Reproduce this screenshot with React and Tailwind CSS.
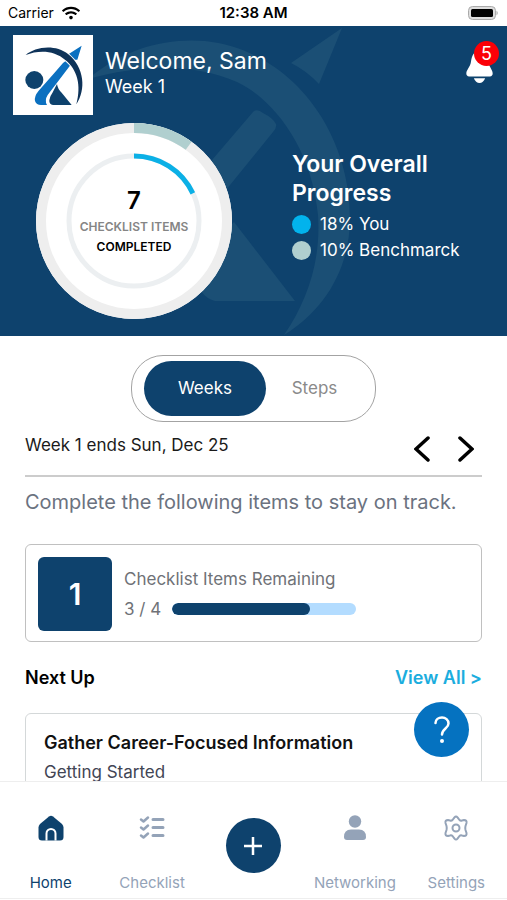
import { useState } from "react";
import { FaWifi } from "react-icons/fa";

const tabs = ["Weeks", "Steps"];

function Logo() {
  return (
    <svg viewBox="0 0 240 240" className="size-20 shrink-0 bg-white" role="img" aria-label="Logo">
      <circle cx="64" cy="135" r="27" fill="#0e426d" />
      <path
        d="M206 32 L166 58 Q172 62 173 67 L150 84 L126 112 L77 167 Q63 184 66 198 Q70 210 84 210 L102 210 Q94 196 104 180 L148 122 L180 80 L186 74 L193 74 Z"
        fill="#0b70c0"
      />
      <path
        d="M38 60 C66 36 126 26 166 58 C214 98 220 164 190 208 C206 150 192 104 158 76 C122 44 76 46 38 60 Z"
        fill="#0e3359"
        stroke="#fff"
        strokeWidth="6"
        paintOrder="stroke"
      />
      <path d="M132 147 Q134 162 146 173 L176 210 L120 210 Q108 208 109 196 Q110 184 118 174 Z" fill="#0e426d" />
    </svg>
  );
}

function Watermark() {
  return (
    <svg
      viewBox="0 26 507 310"
      preserveAspectRatio="xMinYMin slice"
      className="pointer-events-none absolute inset-0 size-full"
      fill="#1b4f75"
      aria-hidden="true"
    >
      <path d="M88 79 C125 48 165 38 205 41 C290 50 350 130 350 218 C350 268 325 310 284 335 C308 300 321 260 318 215 C312 150 275 100 237 82 C190 62 140 65 88 79 Z" />
      <path d="M342 28 L291 63 Q307 71 319 84 Z" />
      <path d="M253 112 Q257 108 263 113 Q273 118 276 124 Q277 128 273 132 L226 190 L150 290 L120 270 L212 160 Z" />
      <path d="M234 222 L295 301 L215 301 Q200 298 190 270 Z" />
    </svg>
  );
}

function ProgressRings() {
  return (
    <div className="relative size-[196px] shrink-0">
      <svg viewBox="0 0 196 196" className="size-full" fill="none" aria-hidden="true">
        <circle cx="98" cy="98" r="98" fill="#fff" />
        <g transform="rotate(-90 98 98)">
          <circle cx="98" cy="98" r="93" stroke="#eeeeee" strokeWidth="10" />
          <circle cx="98" cy="98" r="93" stroke="#b0cfcf" strokeWidth="10" pathLength="100" strokeDasharray="10 90" />
          <circle cx="98" cy="98" r="65" stroke="#eceff1" strokeWidth="5" />
          <circle cx="98" cy="98" r="65" stroke="#0bb0e6" strokeWidth="5" pathLength="100" strokeDasharray="18 82" />
        </g>
      </svg>
      <div className="absolute inset-0 flex flex-col items-center justify-center font-semibold">
        <span className="text-2xl leading-8 text-black">7</span>
        <span className="text-xs leading-5 text-[#858585]">CHECKLIST ITEMS</span>
        <span className="text-xs leading-5 text-black">COMPLETED</span>
      </div>
    </div>
  );
}

function StatusBar() {
  return (
    <div className="grid h-[26px] shrink-0 grid-cols-3 items-center px-2 text-black">
      <span className="flex items-center gap-2 text-sm">
        Carrier <FaWifi className="size-[18px]" />
      </span>
      <span className="text-center text-[15px] font-semibold">12:38 AM</span>
      <svg viewBox="0 0 31 14" className="h-3.5 w-[31px] justify-self-end" aria-hidden="true">
        <rect x="0.5" y="0.5" width="27" height="13" rx="4" fill="#ddd" stroke="#aaa" />
        <rect x="3" y="3" width="22" height="8" rx="1.5" fill="#000" />
        <path d="M28.5 4.500 Q31 7 28.500 9.500 Z" fill="#aaa" />
      </svg>
    </div>
  );
}

function Header() {
  return (
    <header className="relative h-[310px] shrink-0 bg-[#0e426d] text-white">
      <Watermark />
      <div className="relative flex items-start pt-[9px] pr-3 pl-[13px]">
        <Logo />
        <div className="flex-1 pt-2.5 pl-3">
          <h1 className="text-[23px] leading-8">Welcome, Sam</h1>
          <p className="text-lg leading-5">Week 1</p>
        </div>
        <button type="button" aria-label="Notifications" className="relative mt-4 mr-0.5">
          <svg viewBox="0 0 28 34" className="h-8 w-[27px]" fill="#fff">
            <path d="M14 0 C8 0 6 5 5 11 C4.500 17 0 20 0 24 Q0 27 3 27 H25 Q28 27 28 24 C28 20 24 17 23 11 C22 5 20 0 14 0 Z" />
            <path d="M8 29 H20 Q18 34 14 34 Q10 34 8 29 Z" />
          </svg>
          <span className="absolute -top-2.5 -right-1.5 flex size-[25px] items-center justify-center rounded-full bg-[#fb0007] text-lg leading-none">
            5
          </span>
        </button>
      </div>
      <div className="relative flex items-start gap-[60px] pt-2 pl-9">
        <ProgressRings />
        <div className="pt-[27px]">
          <h2 className="w-40 text-[23px] leading-[29px] font-semibold">Your Overall Progress</h2>
          <ul className="mt-[3px] text-[17px] leading-[26px]">
            <li className="flex items-center gap-[9px]">
              <span className="size-[19px] rounded-full bg-[#02b3ed]" />
              18% You
            </li>
            <li className="flex items-center gap-[9px]">
              <span className="size-[19px] rounded-full bg-[#b0cfcf]" />
              10% Benchmarck
            </li>
          </ul>
        </div>
      </div>
    </header>
  );
}

function HomeIcon() {
  return (
    <svg viewBox="0 0 26 26" className="size-[26px]" aria-hidden="true">
      <path
        d="M11 1.500 Q13 0 15 1.500 L24 9 Q25.500 10.500 25.500 12.500 V22 Q25.500 25.500 22 25.500 H4 Q0.500 25.500 0.500 22 V12.500 Q0.500 10.500 2 9 Z"
        fill="#0e426d"
      />
      <path d="M8.500 25.500 V18.500 A4.500 4.500 0 0 1 17.500 18.500 V25.500" fill="none" stroke="#fff" strokeWidth="2" />
    </svg>
  );
}

function ChecklistIcon() {
  return (
    <svg viewBox="0 0 26 26" className="size-[26px]" fill="none" stroke="currentColor" strokeLinecap="round" strokeLinejoin="round" aria-hidden="true">
      <path d="M2 4.500 L4.500 6.500 L9 2.500 M2 12.500 L4.500 14.500 L9 10.500 M2 20.500 L4.500 22.500 L9 18.500" strokeWidth="2.500" />
      <path d="M14 4.500 H24 M14 12.500 H24 M14 20.500 H24" strokeWidth="3" />
    </svg>
  );
}

function PersonIcon() {
  return (
    <svg viewBox="0 0 26 26" className="size-[26px]" fill="currentColor" aria-hidden="true">
      <circle cx="13" cy="6.500" r="6.200" />
      <path d="M2 22 Q2 14.500 9 14.500 H17 Q24 14.500 24 22 Q24 25 21 25 H5 Q2 25 2 22 Z" />
    </svg>
  );
}

function GearIcon() {
  return (
    <svg viewBox="0 0 26 26" className="size-[26px]" fill="none" stroke="currentColor" strokeWidth="2" strokeLinejoin="round" aria-hidden="true">
      <circle cx="13" cy="13" r="3.500" />
      <path d="M11.500 2.300 Q13 0.500 14.500 2.300 L16.500 5 Q17.500 6 19 5.500 L21 5 Q24 5 23.500 8 L22.500 11 Q22 13 22.500 15 L23.500 18 Q24 21 21 21 L19 20.500 Q17.500 20 16.500 21 L14.500 23.700 Q13 25.500 11.500 23.700 L9.500 21 Q8.500 20 7 20.500 L5 21 Q2 21 2.500 18 L3.500 15 Q4 13 3.500 11 L2.500 8 Q2 5 5 5 L7 5.500 Q8.500 6 9.500 5 Z" />
    </svg>
  );
}

function NavItem({ label, active, children }) {
  return (
    <a
      href="#"
      aria-current={active ? "page" : undefined}
      className={`flex flex-col items-center pt-[33px] text-[15px] leading-5 ${active ? "text-[#0e426d]" : "text-[#94a3b8]"}`}
    >
      {children}
      <span className="mt-8">{label}</span>
    </a>
  );
}

function BottomNav() {
  return (
    <nav className="grid h-[118px] shrink-0 grid-cols-5 border-y border-[#eeeeee] bg-white">
      <NavItem label="Home" active>
        <HomeIcon />
      </NavItem>
      <NavItem label="Checklist">
        <ChecklistIcon />
      </NavItem>
      <button
        type="button"
        aria-label="Add"
        className="mt-9 flex size-[55px] items-center justify-center justify-self-center rounded-full bg-[#0e426d]"
      >
        <svg viewBox="0 0 18 18" className="size-[18px]" stroke="#fff" strokeWidth="2.500">
          <path d="M9 0 V18 M0 9 H18" />
        </svg>
      </button>
      <NavItem label="Networking">
        <PersonIcon />
      </NavItem>
      <NavItem label="Settings">
        <GearIcon />
      </NavItem>
    </nav>
  );
}

export default function App() {
  const [tab, setTab] = useState("Weeks");
  const done = 3;
  const total = 4;

  return (
    <div className="flex h-screen flex-col overflow-hidden bg-white font-[Inter,sans-serif]">
      <StatusBar />
      <Header />
      <div className="relative min-h-0 flex-1">
        <main className="h-full overflow-hidden px-[25px] pt-[19px]">
          <div className="mx-auto flex h-[67px] w-[245px] items-center rounded-[32px] border border-[#a3a3a3] px-3">
            {tabs.map((t) => (
              <button
                key={t}
                type="button"
                onClick={() => setTab(t)}
                className={`h-[55px] rounded-[28px] text-[17px] ${
                  t === tab ? "w-[122px] bg-[#0e426d] text-white" : "flex-1 text-[#8a8a8a]"
                }`}
              >
                {t}
              </button>
            ))}
          </div>

          <div className="flex h-[55px] items-start justify-between border-b-2 border-[#cccccc] pt-[11px] pr-2">
            <p className="text-[17px] leading-6 text-[#1a1a1a]">Week 1 ends Sun, Dec 25</p>
            <div className="flex gap-7 pt-[3px]">
              <button type="button" aria-label="Previous week">
                <svg viewBox="0 0 16 26" className="h-[26px] w-4" fill="none" stroke="#000" strokeWidth="3.500" strokeLinecap="round">
                  <path d="M14 2 L2 13 L14 24" />
                </svg>
              </button>
              <button type="button" aria-label="Next week">
                <svg viewBox="0 0 16 26" className="h-[26px] w-4" fill="none" stroke="#000" strokeWidth="3.500" strokeLinecap="round">
                  <path d="M2 2 L14 13 L2 24" />
                </svg>
              </button>
            </div>
          </div>
          <p className="mt-[9px] text-xl leading-8 text-[#6b7280]">
            Complete the following items to stay on track.
          </p>

          <section className="mt-[26px] flex items-center gap-3 rounded-md border border-[#c0c0c0] px-3 pt-3 pb-2.5">
            <div className="flex size-[74px] items-center justify-center rounded-md bg-[#0e426d] text-3xl font-semibold text-white">
              1
            </div>
            <div className="text-[17px] leading-[30px] text-[#6f7277]">
              <p>Checklist Items Remaining</p>
              <div className="flex items-center gap-[11px]">
                <span>
                  {done} / {total}
                </span>
                <div className="h-3 w-[184px] overflow-hidden rounded-full bg-[#b3dcff]">
                  <div className="h-full rounded-full bg-[#0e426d]" style={{ width: `${(done / total) * 100}%` }} />
                </div>
              </div>
            </div>
          </section>

          <div className="mt-6 flex items-center justify-between text-lg leading-6 font-semibold">
            <h2 className="text-black">Next Up</h2>
            <a href="#" className="text-[#1badde]">
              View All &gt;
            </a>
          </div>

          <section className="mt-[23px] rounded-md border border-[#d4d8d9] px-[18px] pt-[17px] pb-4">
            <h3 className="text-lg leading-6 font-semibold text-[#111111]">Gather Career-Focused Information</h3>
            <p className="mt-[5px] text-[17px] leading-6 text-[#424554]">Getting Started</p>
          </section>
        </main>
        <button
          type="button"
          aria-label="Help"
          className="absolute right-[38px] bottom-6 flex size-[55px] items-center justify-center rounded-full bg-[#0572c0] text-white"
        >
          <svg viewBox="0 0 18 28" className="h-7 w-[18px]" fill="none" stroke="currentColor" strokeWidth="2.500" strokeLinecap="round" aria-hidden="true">
            <path d="M2.500 7 C2.500 3.500 5.500 1.500 9 1.500 C12.500 1.500 15.500 4 15.500 7.500 C15.500 12.500 9 12.500 9 18.500" />
            <circle cx="9" cy="25" r="2" fill="currentColor" stroke="none" />
          </svg>
        </button>
      </div>
      <BottomNav />
      <div className="h-px shrink-0" />
    </div>
  );
}
